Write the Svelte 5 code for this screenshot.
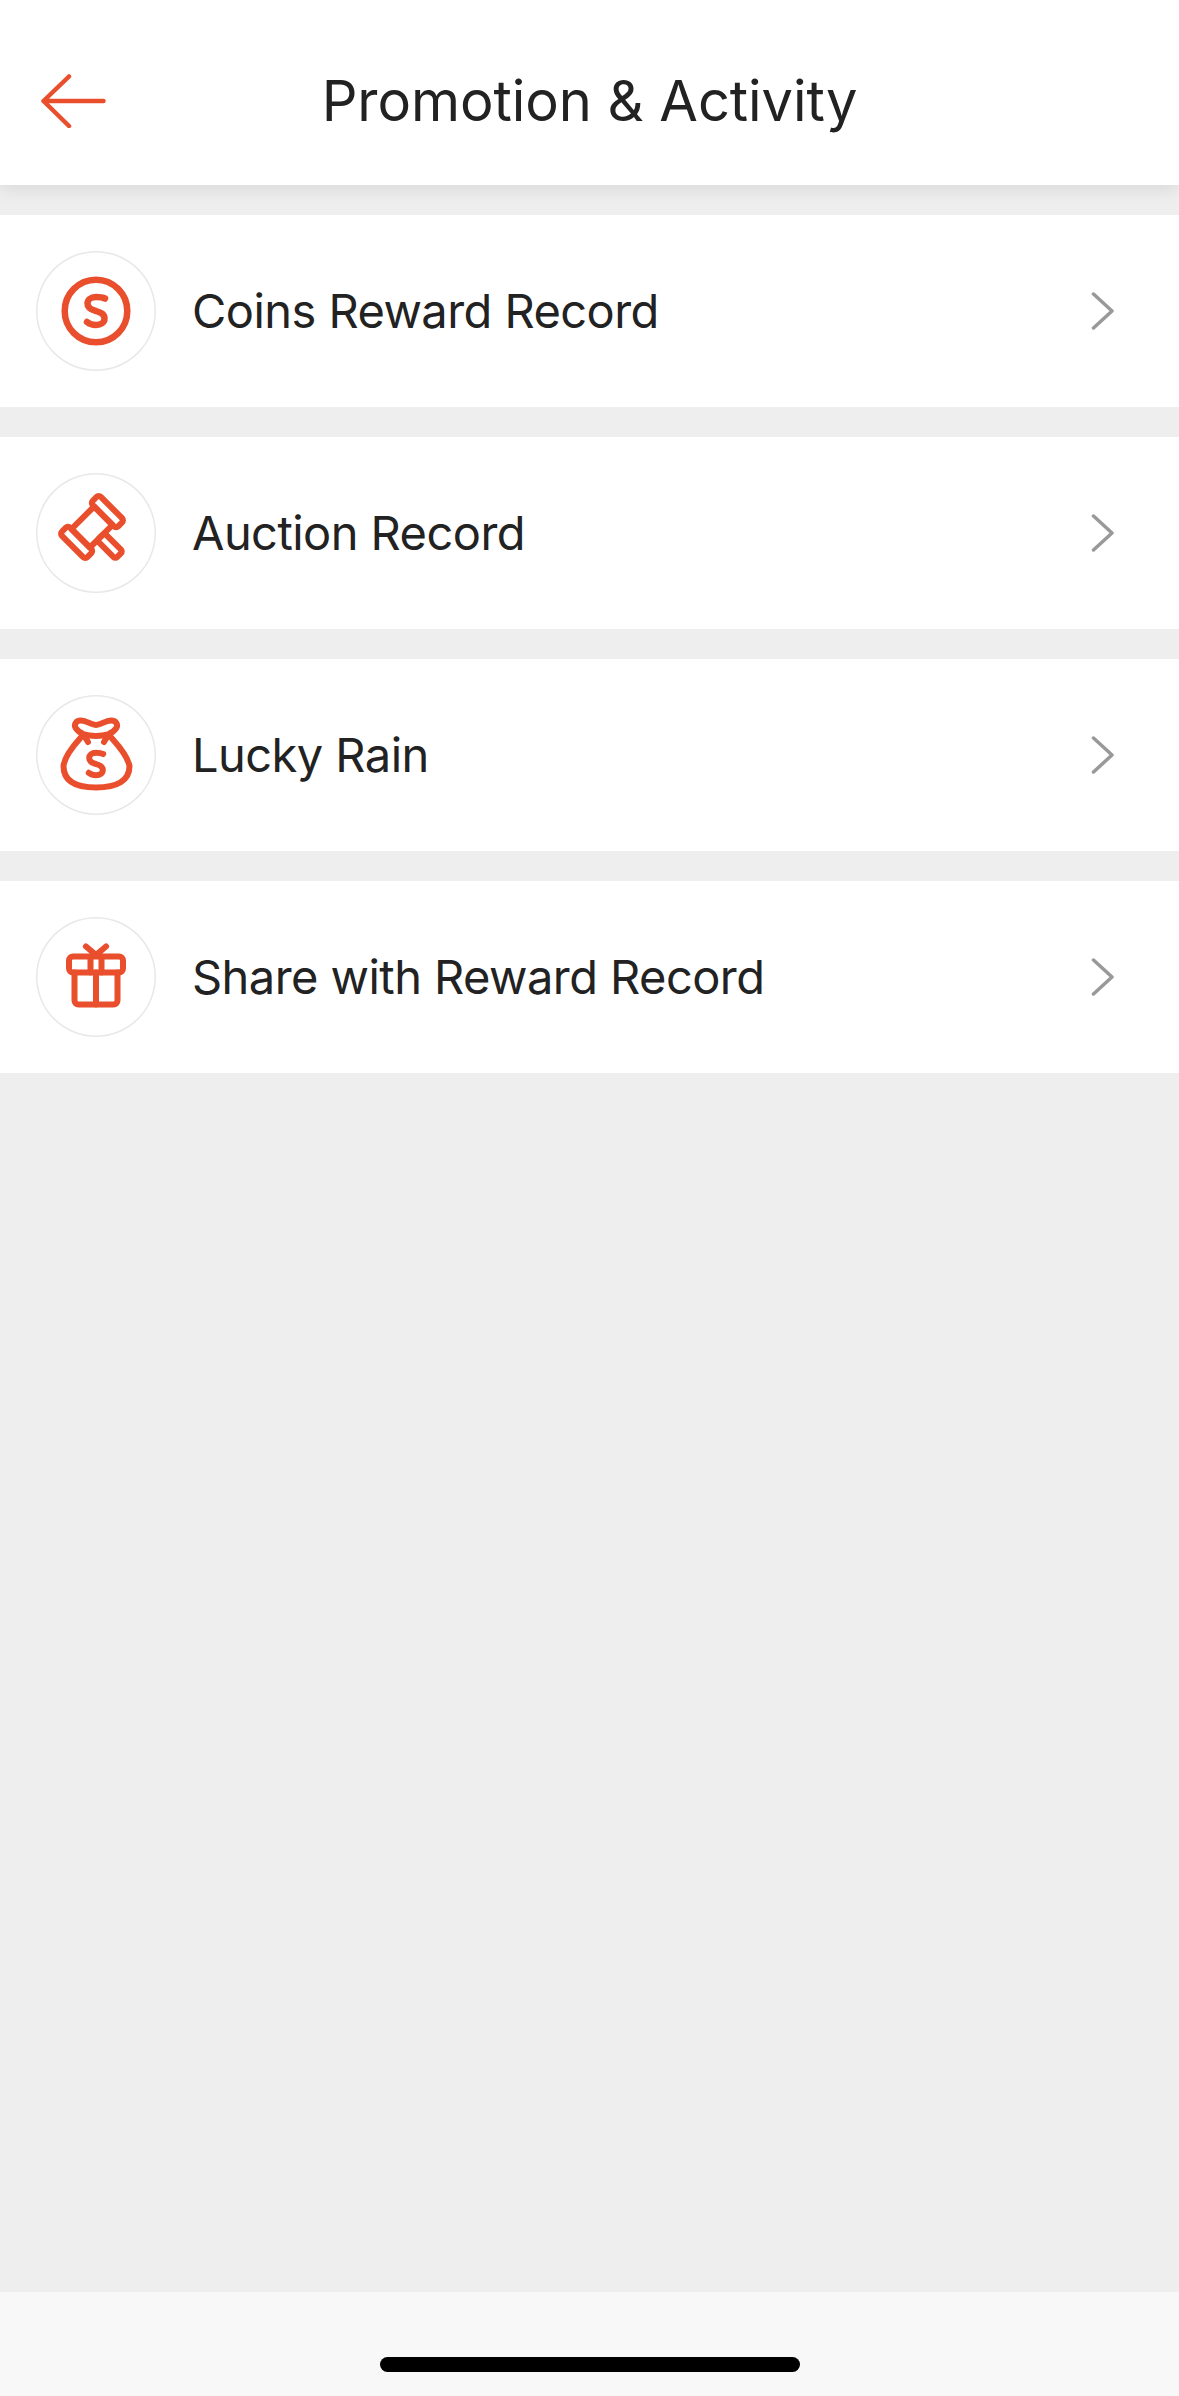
<script>
  const rows = [
    { label: 'Coins Reward Record', icon: 'coin' },
    { label: 'Auction Record', icon: 'gavel' },
    { label: 'Lucky Rain', icon: 'bag' },
    { label: 'Share with Reward Record', icon: 'gift' }
  ];
  const S = 'M69 47.5C66 46 63 46 60 46C54.5 46 51.5 49 51.5 52.5C51.5 57 56 59 60 60C65 61.5 68.5 63 68.5 67.5C68.5 71.5 65 74 60 74C56.5 74 53.5 73 51 71';
</script>

<div class="screen">
  <header class="header">
    <button class="back" aria-label="Back">
      <svg width="78" height="54" viewBox="0 0 78 54" fill="none" stroke="#ea4f2d" stroke-width="4.5" stroke-linecap="round" stroke-linejoin="round">
        <path d="M29 2.5L3.5 27L29 52M3.5 27H63.5" />
      </svg>
    </button>
    <h1 class="title">Promotion &amp; Activity</h1>
    <span></span>
  </header>

  <main class="list">
    {#each rows as row}
      <div class="row">
        <span class="badge">
          <svg width="120" height="120" viewBox="0 0 120 120" fill="none" stroke="#ea4f2d" stroke-width="6" stroke-linecap="round" stroke-linejoin="round">
            {#if row.icon === 'coin'}
              <circle cx="60" cy="60" r="31.3" stroke-width="6.5" />
              <path d={S} stroke-width="6.5" />
            {:else if row.icon === 'gavel'}
              <g transform="translate(56 54) rotate(45)">
                <rect x="-18" y="-27.5" width="36" height="11.5" rx="3" />
                <rect x="-18" y="16" width="36" height="11.5" rx="3" />
                <rect x="-13" y="-16" width="26" height="32" />
                <rect x="13" y="-4.5" width="26" height="10.5" rx="2.5" />
              </g>
            {:else if row.icon === 'bag'}
              <path d="M60 30C55 30 51 25.5 45 25.5C39.5 25.5 37.5 30 40 33.5C43 38 50 41 60 41C70 41 77 38 80 33.5C82.5 30 80.5 25.5 75 25.5C69 25.5 65 30 60 30Z" />
              <path d="M47 40C43 45 29 58 27.5 71C27.5 85 38 92.5 60 92.5C82 92.5 93.5 85 93.5 71C91 58 77 45 73 40" />
              <path d="M49 42L52 47M71 42L68 47" />
              <path d={S} transform="translate(60 69) scale(.8) translate(-60 -60)" stroke-width="7.5" />
            {:else}
              <path d="M50 29.5L60 38L70 29.5" />
              <rect x="33" y="39.5" width="54" height="16" rx="4" />
              <path d="M38.5 55.5V83.5A4 4 0 0 0 42.5 87.5H77.5A4 4 0 0 0 81.5 83.5V55.5" />
              <path d="M54.5 39.5V55.5M65.5 39.5V55.5M60 55.5V87.5" />
            {/if}
          </svg>
        </span>
        <span class="label">{row.label}</span>
        <svg class="chev" width="24" height="38" viewBox="0 0 24 38" fill="none" stroke="#999" stroke-width="3.5" stroke-linecap="round" stroke-linejoin="round">
          <path d="M2.5 2L21 19L2.5 36" />
        </svg>
      </div>
    {/each}
  </main>

  <footer class="footer">
    <div class="home"></div>
  </footer>
</div>

<style>
  :global(body) {
    margin: 0;
    background: #eeeeee;
  }
  .screen {
    width: 1179px;
    height: 2396px;
    display: flex;
    flex-direction: column;
    background: #eeeeee;
    font-family: Inter, "Liberation Sans", sans-serif;
    color: #222;
    overflow: hidden;
  }
  .header {
    position: relative;
    z-index: 1;
    height: 185px;
    box-sizing: border-box;
    padding-top: 16px;
    flex: none;
    display: grid;
    grid-template-columns: 1fr auto 1fr;
    align-items: center;
    background: #fff;
    box-shadow: 0 3px 18px rgba(0, 0, 0, 0.1);
  }
  .back {
    justify-self: start;
    display: flex;
    margin: 0 0 0 40px;
    padding: 0;
    border: 0;
    background: none;
  }
  .title {
    margin: 0;
    font-size: 56px;
    font-weight: 400;
    letter-spacing: -0.05px;
    line-height: 68px;
  }
  .list {
    flex: 1;
    padding-top: 30px;
    display: flex;
    flex-direction: column;
    gap: 30px;
  }
  .row {
    height: 192px;
    display: flex;
    align-items: center;
    padding: 0 64px 0 36px;
    background: #fff;
  }
  .badge {
    width: 120px;
    height: 120px;
    flex: none;
    border-radius: 50%;
    box-shadow: inset 0 0 0 1.5px #e8e8e8;
    display: flex;
  }
  .label {
    flex: 1;
    margin-left: 36px;
    font-size: 47px;
    letter-spacing: -0.55px;
    line-height: 60px;
  }
  .chev {
    flex: none;
  }
  .footer {
    height: 104px;
    flex: none;
    background: #f8f8f8;
    display: flex;
    justify-content: center;
  }
  .home {
    width: 420px;
    height: 15px;
    margin-top: 65px;
    border-radius: 8px;
    background: #000;
  }
</style>
